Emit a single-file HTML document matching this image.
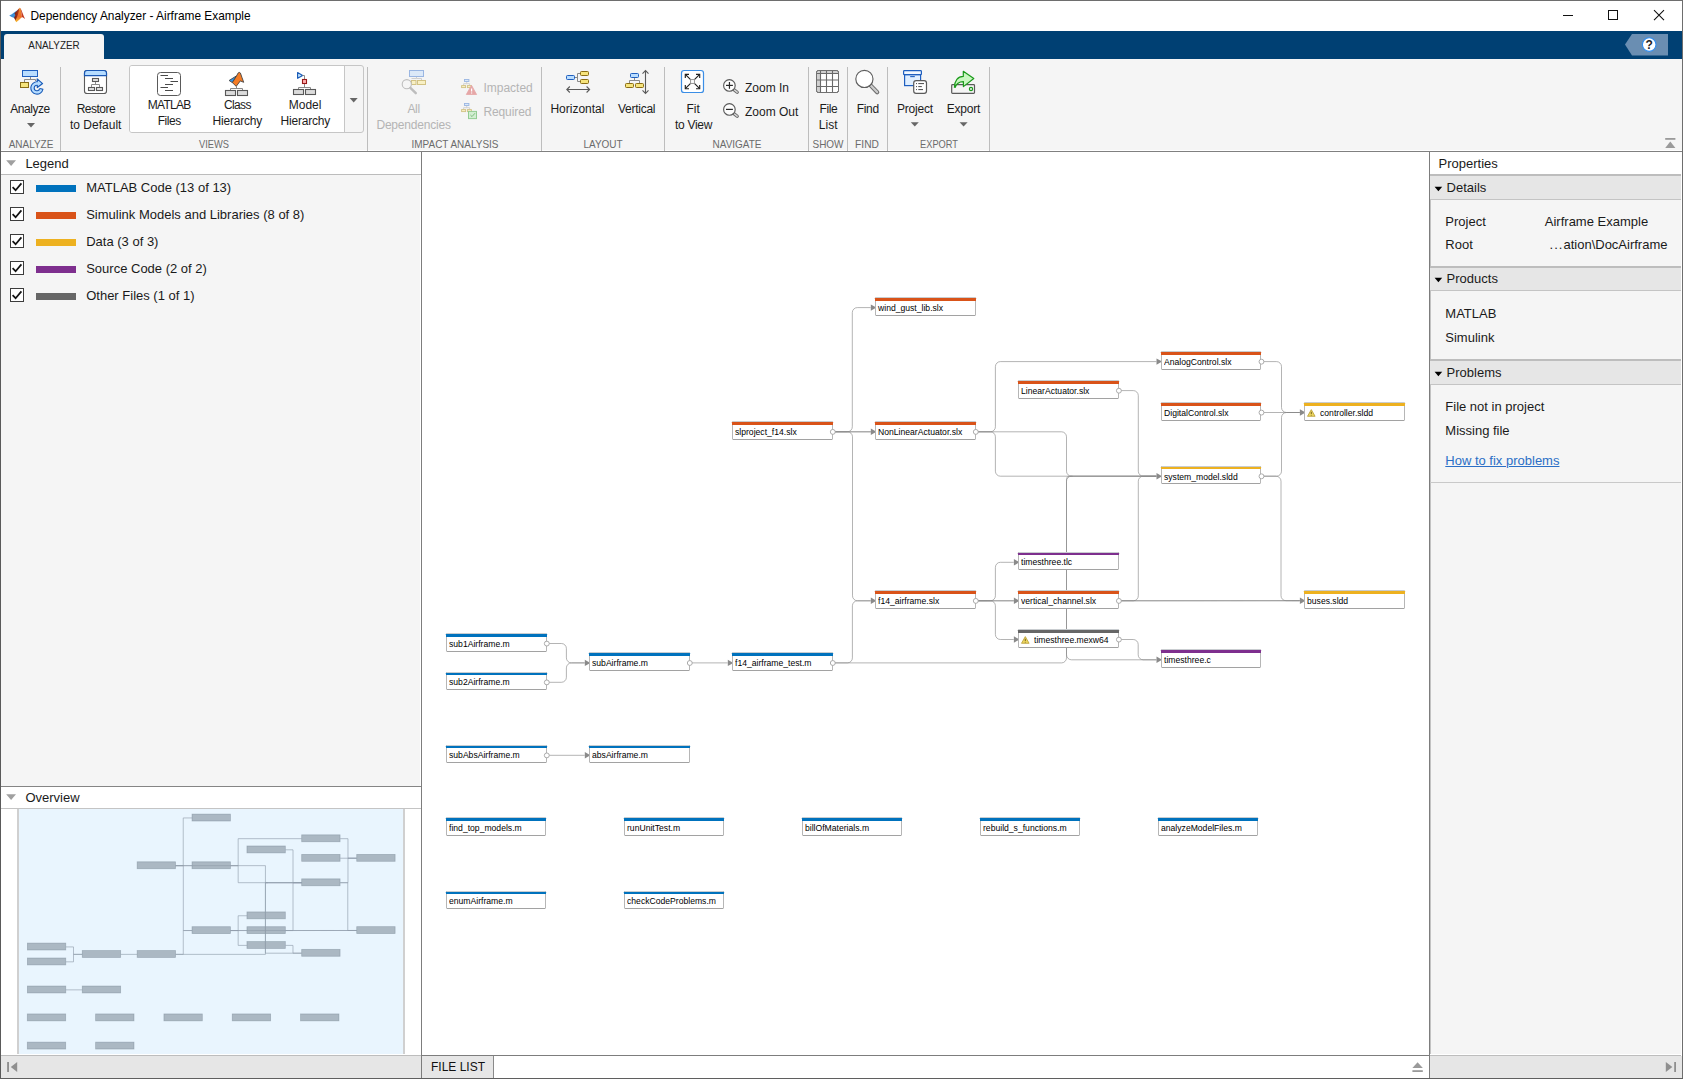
<!DOCTYPE html>
<html lang="en"><head><meta charset="utf-8"><title>Dependency Analyzer - Airframe Example</title>
<style>
*{box-sizing:border-box;margin:0;padding:0}
html,body{width:1683px;height:1079px;overflow:hidden;background:#fff}
body{position:relative;font-family:"Liberation Sans",sans-serif;font-size:13px;color:#1a1a1a}
svg{position:absolute;overflow:visible}
.nd{position:absolute;width:100.4px;height:18px;background:#fff;border:1px solid #b6b6b6;border-bottom-color:#a2a2a2;border-top:none;border-radius:0 0 1.5px 1.5px}
.nd i{position:absolute;left:-1px;right:-1px;top:-.6px;height:3.6px;display:block;border-top:.6px solid #c9cdd0;border-radius:1.2px 1.2px 0 0;background-clip:padding-box}
.nd span{position:absolute;left:1.8px;top:4.25px;font-size:9.4px;line-height:12px;white-space:nowrap;transform:scaleX(.918);transform-origin:0 50%;color:#000;font-style:normal}
.nd.w span{left:14.4px}
</style></head><body>
<div style="position:absolute;left:0px;top:0px;width:1683px;height:31px;background:#fff;"></div>
<svg style="left:0px;top:0px" width="34" height="30" viewBox="0 0 34 30">
<defs><linearGradient id="lg1" x1="0" y1="0" x2="1" y2="0"><stop offset="0" stop-color="#6a1a14"/><stop offset="1" stop-color="#c8401a"/></linearGradient>
<linearGradient id="lg2" x1="0" y1="0" x2="0" y2="1"><stop offset="0" stop-color="#e8902a"/><stop offset=".6" stop-color="#ee6a2a"/><stop offset="1" stop-color="#f6c030"/></linearGradient></defs>
<path d="M9.2 15.6 C12 14.2 15.4 11.6 18.6 9.2 L16 14.6 L14.2 18 C12.6 17.6 10.8 16.6 9.2 15.6 Z" fill="#3d8fd6"/>
<path d="M14.4 13.2 C16.2 11.8 18 9.6 19.4 7.9 L19.8 12 L17.6 18.6 L15.6 20.8 L14 17.8 L15.4 15 Z" fill="url(#lg1)"/>
<path d="M19.4 7.9 C20.2 7.6 20.6 8.6 21 10 L22 17.2 C20.4 18.4 18.2 20.8 16.3 22.2 L15.2 20.6 C17.2 17.6 18.8 12.6 19.4 7.9 Z" fill="url(#lg2)"/>
<path d="M20.2 8 C21.6 9.6 23 14.6 25.1 19 C23.8 18 22.8 17.4 21.9 17 C21.6 13.6 21.2 10.4 20.2 8 Z" fill="#c23a22"/>
</svg>
<div style="position:absolute;top:10.93px;font-size:11.9px;line-height:11.9px;color:#000;white-space:nowrap;left:30.50px;">Dependency Analyzer - Airframe Example</div>
<svg style="left:1555px;top:5px" width="120" height="22" viewBox="0 0 120 22">
<path d="M8 10.5 H18" stroke="#111" stroke-width="1" fill="none"/>
<rect x="53.5" y="5.5" width="9" height="9" stroke="#111" stroke-width="1" fill="none"/>
<path d="M99 5.2 L109 15.2 M109 5.2 L99 15.2" stroke="#111" stroke-width="1.1" fill="none"/>
</svg>
<div style="position:absolute;left:1px;top:31px;width:1681px;height:28px;background:#004073;"></div>
<div style="position:absolute;left:4px;top:34px;width:100px;height:25px;background:#f5f5f5;border-radius:3px 3px 0 0;"></div>
<div style="position:absolute;top:39.65px;font-size:11.4px;line-height:11.4px;color:#222;white-space:nowrap;left:-95.80px;width:300px;text-align:center;transform:scaleX(.865);">ANALYZER</div>
<svg style="left:1624px;top:33px" width="46" height="24" viewBox="0 0 46 24">
<path d="M1 11.6 L8 1 H44 V22.6 H8 Z" fill="#6a8eb2"/>
<circle cx="25.2" cy="11.6" r="6.8" fill="#fff" stroke="#2d8cf0" stroke-width="1.1"/>
<text x="25.2" y="16" font-family="Liberation Sans, sans-serif" font-size="12" font-weight="bold" text-anchor="middle" fill="#222">?</text>
</svg>
<div style="position:absolute;left:1px;top:59px;width:1681px;height:91px;background:#f5f5f5;"></div>
<div style="position:absolute;left:1px;top:150px;width:1681px;height:1px;background:#fff;"></div>
<div style="position:absolute;left:1px;top:151px;width:1681px;height:1px;background:#808080;"></div>
<svg style="left:1664px;top:137px" width="13" height="12" viewBox="0 0 13 12">
<rect x="1.2" y="1" width="10.2" height="1.8" fill="#9a9a9a"/>
<path d="M1.2 11 L6.3 4.6 L11.4 11 Z" fill="#9a9a9a"/>
</svg>
<div style="position:absolute;left:60px;top:67px;width:1px;height:84px;background:#bdbdbd;"></div>
<div style="position:absolute;left:367px;top:67px;width:1px;height:84px;background:#bdbdbd;"></div>
<div style="position:absolute;left:541px;top:67px;width:1px;height:84px;background:#bdbdbd;"></div>
<div style="position:absolute;left:664px;top:67px;width:1px;height:84px;background:#bdbdbd;"></div>
<div style="position:absolute;left:808px;top:67px;width:1px;height:84px;background:#bdbdbd;"></div>
<div style="position:absolute;left:847px;top:67px;width:1px;height:84px;background:#bdbdbd;"></div>
<div style="position:absolute;left:887px;top:67px;width:1px;height:84px;background:#bdbdbd;"></div>
<div style="position:absolute;left:989px;top:67px;width:1px;height:84px;background:#bdbdbd;"></div>
<div style="position:absolute;left:129px;top:65px;width:235px;height:68px;border:1px solid #c6c6c6;border-radius:3px;background:#f5f5f5"></div>
<div style="position:absolute;left:130px;top:66px;width:215px;height:66px;background:#fff;border-right:1px solid #c6c6c6;border-radius:2px 0 0 2px"></div>
<div style="position:absolute;top:102.74px;font-size:12px;line-height:12px;color:#1c1c1c;white-space:nowrap;left:-120.00px;width:300px;text-align:center;letter-spacing:-0.43px;">Analyze</div>
<div style="position:absolute;top:102.74px;font-size:12px;line-height:12px;color:#1c1c1c;white-space:nowrap;left:-54.10px;width:300px;text-align:center;letter-spacing:-0.5px;">Restore</div>
<div style="position:absolute;top:118.54px;font-size:12px;line-height:12px;color:#1c1c1c;white-space:nowrap;left:-54.30px;width:300px;text-align:center;">to Default</div>
<div style="position:absolute;top:98.54px;font-size:12px;line-height:12px;color:#1c1c1c;white-space:nowrap;left:19.20px;width:300px;text-align:center;letter-spacing:-0.7px;">MATLAB</div>
<div style="position:absolute;top:115.34px;font-size:12px;line-height:12px;color:#1c1c1c;white-space:nowrap;left:19.30px;width:300px;text-align:center;letter-spacing:-0.44px;">Files</div>
<div style="position:absolute;top:98.54px;font-size:12px;line-height:12px;color:#1c1c1c;white-space:nowrap;left:87.40px;width:300px;text-align:center;letter-spacing:-0.6px;">Class</div>
<div style="position:absolute;top:115.34px;font-size:12px;line-height:12px;color:#1c1c1c;white-space:nowrap;left:87.30px;width:300px;text-align:center;letter-spacing:-0.22px;">Hierarchy</div>
<div style="position:absolute;top:98.54px;font-size:12px;line-height:12px;color:#1c1c1c;white-space:nowrap;left:155.10px;width:300px;text-align:center;">Model</div>
<div style="position:absolute;top:115.34px;font-size:12px;line-height:12px;color:#1c1c1c;white-space:nowrap;left:155.30px;width:300px;text-align:center;letter-spacing:-0.22px;">Hierarchy</div>
<div style="position:absolute;top:103.24px;font-size:12px;line-height:12px;color:#b4b4b4;white-space:nowrap;left:263.60px;width:300px;text-align:center;letter-spacing:-0.4px;">All</div>
<div style="position:absolute;top:119.24px;font-size:12px;line-height:12px;color:#b4b4b4;white-space:nowrap;left:263.60px;width:300px;text-align:center;letter-spacing:-0.2px;">Dependencies</div>
<div style="position:absolute;top:81.74px;font-size:12px;line-height:12px;color:#b4b4b4;white-space:nowrap;left:483.40px;">Impacted</div>
<div style="position:absolute;top:106.24px;font-size:12px;line-height:12px;color:#b4b4b4;white-space:nowrap;left:483.40px;letter-spacing:-0.1px;">Required</div>
<div style="position:absolute;top:102.74px;font-size:12px;line-height:12px;color:#1c1c1c;white-space:nowrap;left:427.40px;width:300px;text-align:center;">Horizontal</div>
<div style="position:absolute;top:102.74px;font-size:12px;line-height:12px;color:#1c1c1c;white-space:nowrap;left:486.60px;width:300px;text-align:center;letter-spacing:-0.25px;">Vertical</div>
<div style="position:absolute;top:102.74px;font-size:12px;line-height:12px;color:#1c1c1c;white-space:nowrap;left:543.20px;width:300px;text-align:center;">Fit</div>
<div style="position:absolute;top:118.84px;font-size:12px;line-height:12px;color:#1c1c1c;white-space:nowrap;left:543.50px;width:300px;text-align:center;letter-spacing:-0.28px;">to View</div>
<div style="position:absolute;top:81.84px;font-size:12px;line-height:12px;color:#1c1c1c;white-space:nowrap;left:745.00px;">Zoom In</div>
<div style="position:absolute;top:105.74px;font-size:12px;line-height:12px;color:#1c1c1c;white-space:nowrap;left:745.00px;">Zoom Out</div>
<div style="position:absolute;top:102.74px;font-size:12px;line-height:12px;color:#1c1c1c;white-space:nowrap;left:678.40px;width:300px;text-align:center;letter-spacing:-0.37px;">File</div>
<div style="position:absolute;top:118.74px;font-size:12px;line-height:12px;color:#1c1c1c;white-space:nowrap;left:678.20px;width:300px;text-align:center;">List</div>
<div style="position:absolute;top:102.74px;font-size:12px;line-height:12px;color:#1c1c1c;white-space:nowrap;left:717.80px;width:300px;text-align:center;letter-spacing:-0.37px;">Find</div>
<div style="position:absolute;top:102.74px;font-size:12px;line-height:12px;color:#1c1c1c;white-space:nowrap;left:764.90px;width:300px;text-align:center;letter-spacing:-0.2px;">Project</div>
<div style="position:absolute;top:102.74px;font-size:12px;line-height:12px;color:#1c1c1c;white-space:nowrap;left:813.40px;width:300px;text-align:center;letter-spacing:-0.2px;">Export</div>
<div style="position:absolute;top:137.88px;font-size:11.6px;line-height:11.6px;color:#6b6b6b;white-space:nowrap;left:-119.50px;width:300px;text-align:center;transform:scaleX(0.86);">ANALYZE</div>
<div style="position:absolute;top:137.88px;font-size:11.6px;line-height:11.6px;color:#6b6b6b;white-space:nowrap;left:64.30px;width:300px;text-align:center;transform:scaleX(0.8);">VIEWS</div>
<div style="position:absolute;top:137.88px;font-size:11.6px;line-height:11.6px;color:#6b6b6b;white-space:nowrap;left:304.50px;width:300px;text-align:center;transform:scaleX(0.86);">IMPACT ANALYSIS</div>
<div style="position:absolute;top:137.88px;font-size:11.6px;line-height:11.6px;color:#6b6b6b;white-space:nowrap;left:453.00px;width:300px;text-align:center;transform:scaleX(0.86);">LAYOUT</div>
<div style="position:absolute;top:137.88px;font-size:11.6px;line-height:11.6px;color:#6b6b6b;white-space:nowrap;left:587.00px;width:300px;text-align:center;transform:scaleX(0.86);">NAVIGATE</div>
<div style="position:absolute;top:137.88px;font-size:11.6px;line-height:11.6px;color:#6b6b6b;white-space:nowrap;left:678.00px;width:300px;text-align:center;transform:scaleX(0.86);">SHOW</div>
<div style="position:absolute;top:137.88px;font-size:11.6px;line-height:11.6px;color:#6b6b6b;white-space:nowrap;left:717.40px;width:300px;text-align:center;transform:scaleX(0.88);">FIND</div>
<div style="position:absolute;top:137.88px;font-size:11.6px;line-height:11.6px;color:#6b6b6b;white-space:nowrap;left:788.50px;width:300px;text-align:center;transform:scaleX(0.8);">EXPORT</div>
<svg style="left:0;top:59px" width="1683" height="92" viewBox="0 59 1683 92"><path d="M27 123 H35 L31 127.4 Z" fill="#666"/><path d="M910.8 122.2 H918.8 L914.8 126.60000000000001 Z" fill="#666"/><path d="M959.6 122.2 H967.6 L963.6 126.60000000000001 Z" fill="#666"/><path d="M349.7 98 H357.7 L353.7 102.4 Z" fill="#666"/><rect x="22.5" y="70.5" width="15" height="6" fill="#b9ddff" stroke="#1f5fbf"/><path d="M30.5 77 V79.5 M24.5 82 V79.5 H35.5 V81" stroke="#8a8a8a" fill="none"/><rect x="20.5" y="82.5" width="8" height="5" fill="#f6e47c" stroke="#8a6d14"/><path d="M37.2 83.55 A4.45 4.45 0 1 0 41.3 88.9" stroke="#1a5cb8" stroke-width="4.5" fill="none"/><path d="M37.2 78.9 L42.6 83.6 L37.3 87.5 Z" fill="#b5dcff" stroke="#1a5cb8" stroke-width="1.2" stroke-linejoin="round"/><path d="M37.6 83.55 A4.45 4.45 0 1 0 41.3 88.9" stroke="#b5dcff" stroke-width="2.3" fill="none"/><path d="M36.4 82.4 H38.4 V84.7 H36.4 Z" fill="#b5dcff"/><path d="M39.6 88.5 L43.2 89.3" stroke="#1a5cb8" stroke-width="1.1" fill="none"/><rect x="84.5" y="70.5" width="22" height="23" rx="2.6" fill="#fff" stroke="#5a5a5a" stroke-width="1.1"/><path d="M84.5 75.6 V73 A2.5 2.5 0 0 1 87 70.5 H104 A2.5 2.5 0 0 1 106.5 73 V75.6 Z" fill="#b5dcff" stroke="#1a58b4" stroke-width="1.2"/><rect x="92.5" y="78.5" width="6" height="3" fill="#e4e4e4" stroke="#585858" stroke-width="1.1"/><rect x="88.5" y="87.5" width="6" height="3" fill="#e4e4e4" stroke="#585858" stroke-width="1.1"/><rect x="96.5" y="87.5" width="6" height="3" fill="#e4e4e4" stroke="#585858" stroke-width="1.1"/><path d="M95.5 82 V84.5 M91.5 87 V84.5 H99.5 V87" stroke="#8a8a8a" fill="none"/><rect x="157.5" y="72.5" width="23" height="23" rx="3" fill="#fff" stroke="#5a5a5a"/><path d="M160.5 75.5 H168 M165 78.5 H173 M170.5 81.5 H178 M165 84.5 H173 M160.5 87.5 H168 M165 90.5 H173" stroke="#4a4a4a" fill="none"/><path d="M229.1 80.5 L236.6 75.8 L232.4 82.6 Z" fill="#2f96ee" stroke="#444" stroke-width=".9" stroke-linejoin="round"/><path d="M236.6 75.8 L238.2 72.9 Q239.3 71.8 240.4 73.0 L242.0 77.6 L243.7 82.3 L240.3 80.9 L236.2 86.4 L232.4 82.6 Z" fill="#f47c26" stroke="#444" stroke-width=".9" stroke-linejoin="round"/><path d="M236.5 86 V88.5 M230.5 90 V88.5 H242.5 V90" stroke="#8a8a8a" fill="none"/><rect x="225.5" y="90.5" width="10" height="5" fill="#dcdcdc" stroke="#585858" stroke-width="1.1"/><rect x="237.5" y="90.5" width="10" height="5" fill="#dcdcdc" stroke="#585858" stroke-width="1.1"/><path d="M297.6 72.5 L302.6 75.4 L297.6 78.3 Z" fill="#c8e8ff" stroke="#1a5cb8" stroke-width="1.2" stroke-linejoin="round"/><path d="M302.5 75.5 H304.5 V79 M304.5 84 V87.5 M298.5 89.5 V87.5 H310.5 V89.5" stroke="#8a8a8a" fill="none"/><rect x="302.5" y="79.5" width="4" height="4" fill="#ffb0b0" stroke="#981818" stroke-width="1.1"/><rect x="293.5" y="89.5" width="10" height="5" fill="#dcdcdc" stroke="#585858" stroke-width="1.1"/><rect x="305.5" y="89.5" width="10" height="5" fill="#dcdcdc" stroke="#585858" stroke-width="1.1"/><rect x="409.5" y="70.5" width="14" height="6" fill="#dce9f8" stroke="#9ab6e2"/><path d="M416.5 77 V78.5 H411.5 M416.5 78.5 H421.5 V80" stroke="#cfcfcf" fill="none"/><rect x="411.5" y="80.5" width="4.5" height="4" fill="#f8f0c4" stroke="#d2c284"/><rect x="417.5" y="80.5" width="8" height="4" fill="#f8f0c4" stroke="#d2c284"/><circle cx="406.8" cy="84.2" r="4.6" fill="#f5f5f5" stroke="#bdbdbd" stroke-width="1.1"/><path d="M410.4 87.8 L415.8 93.2" stroke="#bdbdbd" stroke-width="2.4" stroke-linecap="round" fill="none"/><rect x="464.5" y="79.5" width="4.4" height="2" fill="#dce9f8" stroke="#9ab6e2" stroke-width=".9"/><path d="M466.7 82 V83.7 M463.6 85.4 V83.7 H469.6 V85.4" stroke="#cfcfcf" stroke-width=".9" fill="none"/><rect x="461.6" y="85.6" width="4" height="2" fill="#f8f0c4" stroke="#d2c284" stroke-width=".9"/><rect x="467.4" y="85.6" width="4" height="2" fill="#f8f0c4" stroke="#d2c284" stroke-width=".9"/><rect x="464.5" y="103.5" width="4.4" height="2" fill="#dce9f8" stroke="#9ab6e2" stroke-width=".9"/><path d="M466.7 106 V107.7 M463.6 109.4 V107.7 H469.6 V109.4" stroke="#cfcfcf" stroke-width=".9" fill="none"/><rect x="461.6" y="109.6" width="4" height="2" fill="#f8f0c4" stroke="#d2c284" stroke-width=".9"/><rect x="467.4" y="109.6" width="4" height="2" fill="#f8f0c4" stroke="#d2c284" stroke-width=".9"/><path d="M471.5 85.3 L476.6 94.5 H466.3 Z" fill="#e6a7a7" stroke="#e6a7a7" stroke-width=".8" stroke-linejoin="round"/><path d="M471.6 88.4 V91.4 M471.6 92.6 V93.6" stroke="#fff" stroke-width="1.2" fill="none"/><rect x="468.5" y="111.4" width="8" height="7.2" fill="#d2eed2" stroke="#93cc93"/><path d="M470.4 115 L472 116.6 L475 113.2" stroke="#7fbf7f" stroke-width="1" fill="none"/><rect x="566.5" y="75.5" width="8" height="4" rx=".9" fill="#b9ddff" stroke="#1f5fbf"/><path d="M575 77.5 H577.5 M580 73.5 H577.5 V81.5 H580" stroke="#8a8a8a" fill="none"/><rect x="580.5" y="71.5" width="8" height="4" rx=".9" fill="#f6e47c" stroke="#8a6d14"/><rect x="580.5" y="79.5" width="8" height="4" rx=".9" fill="#f6e47c" stroke="#8a6d14"/><path d="M566.8 89.5 H589.6 M569.8 86.5 L566.8 89.5 L569.8 92.5 M586.6 86.5 L589.6 89.5 L586.6 92.5" stroke="#5a5a5a" stroke-width="1.1" fill="none"/><rect x="630.5" y="73.5" width="8" height="4" rx=".9" fill="#b9ddff" stroke="#1f5fbf"/><path d="M634.5 78 V80.5 M629.5 83 V80.5 H639.5 V83" stroke="#8a8a8a" fill="none"/><rect x="625.5" y="83.5" width="8" height="4" rx=".9" fill="#f6e47c" stroke="#8a6d14"/><rect x="635.5" y="83.5" width="8" height="4" rx=".9" fill="#f6e47c" stroke="#8a6d14"/><path d="M645.5 70.6 V93.4 M642.5 73.6 L645.5 70.6 L648.5 73.6 M642.5 90.4 L645.5 93.4 L648.5 90.4" stroke="#5a5a5a" stroke-width="1.1" fill="none"/><rect x="681.5" y="70.5" width="22" height="22" rx="2.6" fill="#fff" stroke="#3b8ee6" stroke-width="1.2"/><path d="M690.6 79.6 L685.3 74.3 M694.4 79.6 L699.7 74.3 M690.6 83.4 L685.3 88.7 M694.4 83.4 L699.7 88.7" stroke="#222" stroke-width="1.15" fill="none"/><path d="M685.3 78 V74.3 H689 M696 74.3 H699.7 V78 M685.3 85 V88.7 H689 M696 88.7 H699.7 V85" stroke="#222" stroke-width="1.15" fill="none"/><rect x="690.6" y="79.6" width="3.8" height="3.8" fill="#fff" stroke="#8a8a8a" stroke-width=".9"/><path d="M734 89.7 L737.2 92.3" stroke="#6a6a6a" stroke-width="3.4" stroke-linecap="round" fill="none"/><path d="M734.4 90.0 L737.1 92.2" stroke="#d6d6d6" stroke-width="1.5" stroke-linecap="round" fill="none"/><circle cx="729.4" cy="85.4" r="5.8" fill="#fdfdfd" stroke="#5a5a5a" stroke-width="1.15"/><path d="M726 85.4 H732.9" stroke="#2a2a2a" stroke-width="1.2" fill="none"/><path d="M729.45 82.0 V88.8" stroke="#2a2a2a" stroke-width="1.2" fill="none"/><path d="M734 113.7 L737.2 116.3" stroke="#6a6a6a" stroke-width="3.4" stroke-linecap="round" fill="none"/><path d="M734.4 114.0 L737.1 116.2" stroke="#d6d6d6" stroke-width="1.5" stroke-linecap="round" fill="none"/><circle cx="729.4" cy="109.4" r="5.8" fill="#fdfdfd" stroke="#5a5a5a" stroke-width="1.15"/><path d="M726 109.4 H732.9" stroke="#2a2a2a" stroke-width="1.2" fill="none"/><rect x="816.5" y="70.5" width="22" height="22" rx="2" fill="#fff" stroke="#707070"/><path d="M817 71 H838 V73.5 H817 Z M817 71 H820.5 V92 H817 Z" fill="#d0d0d0"/><path d="M816.5 73.5 H838.5 M816.5 80 H838.5 M816.5 86.5 H838.5 M820.5 70.5 V92.5 M826.5 70.5 V92.5 M832.5 70.5 V92.5" stroke="#6a6a6a" stroke-width="1.1" fill="none"/><rect x="816.5" y="70.5" width="22" height="22" rx="2" fill="none" stroke="#707070"/><path d="M870.6 85.4 L877.2 92.2" stroke="#6e6e6e" stroke-width="4.2" stroke-linecap="round" fill="none"/><path d="M871 85.8 L877.1 92.1" stroke="#cdcdcd" stroke-width="2.2" stroke-linecap="round" fill="none"/><circle cx="864.4" cy="78.9" r="8.6" fill="#fff" stroke="#5f5f5f" stroke-width="1.15"/><rect x="904.6" y="74.6" width="16" height="11" fill="#e0efff" stroke="#1f5fbf" stroke-width="1.2"/><rect x="903.6" y="70.7" width="17.8" height="4" rx=".8" fill="#f2f8ff" stroke="#1f5fbf" stroke-width="1.2"/><path d="M910.2 76.6 H914.8" stroke="#1f5fbf" stroke-width="1.1" fill="none"/><rect x="913.7" y="80.6" width="12.8" height="12.8" rx="2.4" fill="#fff" stroke="#5a5a5a" stroke-width="1.2"/><path d="M916 83.6 H917 M918.3 83.6 H924 M916 86.6 H917 M918.3 86.6 H921.8 M916 89.6 H917 M918.3 89.6 H923" stroke="#4a4a4a" stroke-width="1" fill="none"/><rect x="951.7" y="84.6" width="22.8" height="8.8" rx=".8" fill="#f5f5f5" stroke="#5a5a5a" stroke-width="1.2"/><circle cx="971" cy="89" r="1.6" fill="#f5f5f5" stroke="#1a9a1a" stroke-width="1.2"/><path d="M954.4 87.8 C954.4 80.6 958 76.4 963.3 76.4 V71.3 L973.8 78.5 L963.4 86.6 V81.6 C959.2 81.6 956.2 83.6 955 87.8" fill="#c8f7c0" stroke="#1a9a1a" stroke-width="1.2" stroke-linejoin="round"/></svg>
<div style="position:absolute;left:1px;top:152px;width:420px;height:903px;background:#f5f5f5;"></div>
<div style="position:absolute;left:420px;top:152px;width:1px;height:903px;background:#fff;"></div>
<div style="position:absolute;left:421px;top:152px;width:1px;height:927px;background:#7d7d7d;"></div>
<div style="position:absolute;left:1px;top:152px;width:420px;height:22px;background:#fff;"></div>
<div style="position:absolute;left:1px;top:174px;width:420px;height:1px;background:#bcbcbc;"></div>
<svg style="left:5px;top:159px" width="12" height="8" viewBox="0 0 12 8"><path d="M1.2 1.2 H11 L6.1 6.9 Z" fill="#a0a0a0"/></svg>
<div style="position:absolute;top:156.90px;font-size:13px;line-height:13px;color:#1a1a1a;white-space:nowrap;left:25.40px;">Legend</div>
<div style="position:absolute;left:10px;top:180px;width:14px;height:14px;background:#fff;border:1px solid #3c3c3c"></div>
<svg style="left:10px;top:180px" width="14" height="14" viewBox="0 0 14 14"><path d="M2.6 7.2 L5.6 10.2 L11.4 3.4" stroke="#111" stroke-width="1.7" fill="none"/></svg>
<div style="position:absolute;left:36px;top:185px;width:40px;height:7px;background:#0072bd;"></div>
<div style="position:absolute;top:180.80px;font-size:13px;line-height:13px;color:#1a1a1a;white-space:nowrap;left:86.20px;">MATLAB Code (13 of 13)</div>
<div style="position:absolute;left:10px;top:207px;width:14px;height:14px;background:#fff;border:1px solid #3c3c3c"></div>
<svg style="left:10px;top:207px" width="14" height="14" viewBox="0 0 14 14"><path d="M2.6 7.2 L5.6 10.2 L11.4 3.4" stroke="#111" stroke-width="1.7" fill="none"/></svg>
<div style="position:absolute;left:36px;top:212px;width:40px;height:7px;background:#d95319;"></div>
<div style="position:absolute;top:207.80px;font-size:13px;line-height:13px;color:#1a1a1a;white-space:nowrap;left:86.20px;">Simulink Models and Libraries (8 of 8)</div>
<div style="position:absolute;left:10px;top:234px;width:14px;height:14px;background:#fff;border:1px solid #3c3c3c"></div>
<svg style="left:10px;top:234px" width="14" height="14" viewBox="0 0 14 14"><path d="M2.6 7.2 L5.6 10.2 L11.4 3.4" stroke="#111" stroke-width="1.7" fill="none"/></svg>
<div style="position:absolute;left:36px;top:239px;width:40px;height:7px;background:#edb120;"></div>
<div style="position:absolute;top:234.80px;font-size:13px;line-height:13px;color:#1a1a1a;white-space:nowrap;left:86.20px;">Data (3 of 3)</div>
<div style="position:absolute;left:10px;top:261px;width:14px;height:14px;background:#fff;border:1px solid #3c3c3c"></div>
<svg style="left:10px;top:261px" width="14" height="14" viewBox="0 0 14 14"><path d="M2.6 7.2 L5.6 10.2 L11.4 3.4" stroke="#111" stroke-width="1.7" fill="none"/></svg>
<div style="position:absolute;left:36px;top:266px;width:40px;height:7px;background:#7e2f8e;"></div>
<div style="position:absolute;top:261.80px;font-size:13px;line-height:13px;color:#1a1a1a;white-space:nowrap;left:86.20px;">Source Code (2 of 2)</div>
<div style="position:absolute;left:10px;top:288px;width:14px;height:14px;background:#fff;border:1px solid #3c3c3c"></div>
<svg style="left:10px;top:288px" width="14" height="14" viewBox="0 0 14 14"><path d="M2.6 7.2 L5.6 10.2 L11.4 3.4" stroke="#111" stroke-width="1.7" fill="none"/></svg>
<div style="position:absolute;left:36px;top:293px;width:40px;height:7px;background:#666666;"></div>
<div style="position:absolute;top:288.80px;font-size:13px;line-height:13px;color:#1a1a1a;white-space:nowrap;left:86.20px;">Other Files (1 of 1)</div>
<div style="position:absolute;left:1px;top:786px;width:420px;height:1px;background:#858585;"></div>
<div style="position:absolute;left:1px;top:787px;width:420px;height:21px;background:#fff;"></div>
<div style="position:absolute;left:1px;top:808px;width:420px;height:1px;background:#c4c4c4;"></div>
<svg style="left:5px;top:793px" width="12" height="8" viewBox="0 0 12 8"><path d="M1.2 1.2 H11 L6.1 6.9 Z" fill="#a0a0a0"/></svg>
<div style="position:absolute;top:790.60px;font-size:13px;line-height:13px;color:#1a1a1a;white-space:nowrap;left:25.40px;">Overview</div>
<div style="position:absolute;left:1px;top:809px;width:420px;height:245px;background:#fff;"></div>
<div style="position:absolute;left:17px;top:809px;width:388px;height:245px;background:#e9f5fe;border-left:2px solid #d0d0d0;border-right:2px solid #d0d0d0;"></div>
<div style="position:absolute;left:1px;top:1054px;width:420px;height:1px;background:#fff;"></div>
<div style="position:absolute;left:1px;top:1055px;width:420px;height:1px;background:#bdbdbd;"></div>
<div style="position:absolute;left:1px;top:1056px;width:420px;height:22px;background:#e6e6e6;"></div>
<svg style="left:5px;top:1061px" width="14" height="12" viewBox="0 0 14 12"><rect x="2.1" y="1" width="1.9" height="10" fill="#8f8f8f"/><path d="M12.2 1 V11 L5.8 6 Z" fill="#8f8f8f"/></svg>
<div style="position:absolute;left:422px;top:1055px;width:1007px;height:1px;background:#7d7d7d;"></div>
<div style="position:absolute;left:422px;top:1056px;width:1007px;height:22px;background:#fff;"></div>
<div style="position:absolute;left:422px;top:1056px;width:71px;height:22px;background:#e6e6e6;"></div>
<div style="position:absolute;left:493px;top:1056px;width:1px;height:22px;background:#8a8a8a;"></div>
<div style="position:absolute;top:1060.64px;font-size:12px;line-height:12px;color:#111;white-space:nowrap;left:431.00px;">FILE LIST</div>
<svg style="left:1411px;top:1061px" width="14" height="12" viewBox="0 0 14 12"><path d="M1.4 7 L6.6 1.2 L11.8 7 Z" fill="#9a9a9a"/><rect x="1.4" y="9.2" width="10.4" height="1.8" fill="#9a9a9a"/></svg>
<div style="position:absolute;left:1429px;top:152px;width:1px;height:927px;background:#7d7d7d;"></div>
<div style="position:absolute;left:1430px;top:152px;width:251px;height:902px;background:#f5f5f5;"></div>
<div style="position:absolute;left:1430px;top:152px;width:1px;height:927px;background:#c2c2c2;"></div>
<div style="position:absolute;left:1681px;top:152px;width:1px;height:926px;background:#fff;"></div>
<div style="position:absolute;left:1430px;top:152px;width:251px;height:22px;background:#fff;"></div>
<div style="position:absolute;top:156.90px;font-size:13px;line-height:13px;color:#1a1a1a;white-space:nowrap;left:1438.60px;">Properties</div>
<div style="position:absolute;left:1430px;top:174px;width:251px;height:2px;background:#bdbdbd;"></div>
<div style="position:absolute;left:1430px;top:176px;width:251px;height:23px;background:#e6e6e6;"></div>
<div style="position:absolute;left:1430px;top:199px;width:251px;height:1px;background:#c4c4c4;"></div>
<svg style="left:1434px;top:185.8px" width="9" height="6" viewBox="0 0 9 6"><path d="M0.6 0.8 H8.2 L4.4 5.2 Z" fill="#000"/></svg>
<div style="position:absolute;top:180.80px;font-size:13px;line-height:13px;color:#1a1a1a;white-space:nowrap;left:1446.60px;">Details</div>
<div style="position:absolute;top:215.20px;font-size:13px;line-height:13px;color:#1a1a1a;white-space:nowrap;left:1445.30px;">Project</div>
<div style="position:absolute;top:215.20px;font-size:13px;line-height:13px;color:#1a1a1a;white-space:nowrap;left:1544.80px;">Airframe Example</div>
<div style="position:absolute;top:238.00px;font-size:13px;line-height:13px;color:#1a1a1a;white-space:nowrap;left:1445.30px;">Root</div>
<div style="position:absolute;top:238.00px;font-size:13px;line-height:13px;color:#1a1a1a;white-space:nowrap;left:1549.60px;"><span style="letter-spacing:1px">...</span>ation\DocAirframe</div>
<div style="position:absolute;left:1430px;top:266px;width:251px;height:2px;background:#bdbdbd;"></div>
<div style="position:absolute;left:1430px;top:268px;width:251px;height:22px;background:#e6e6e6;"></div>
<div style="position:absolute;left:1430px;top:290px;width:251px;height:1px;background:#c4c4c4;"></div>
<svg style="left:1434px;top:276.9px" width="9" height="6" viewBox="0 0 9 6"><path d="M0.6 0.8 H8.2 L4.4 5.2 Z" fill="#000"/></svg>
<div style="position:absolute;top:271.90px;font-size:13px;line-height:13px;color:#1a1a1a;white-space:nowrap;left:1446.60px;">Products</div>
<div style="position:absolute;top:307.00px;font-size:13px;line-height:13px;color:#1a1a1a;white-space:nowrap;left:1445.30px;">MATLAB</div>
<div style="position:absolute;top:331.00px;font-size:13px;line-height:13px;color:#1a1a1a;white-space:nowrap;left:1445.30px;">Simulink</div>
<div style="position:absolute;left:1430px;top:359px;width:251px;height:2px;background:#bdbdbd;"></div>
<div style="position:absolute;left:1430px;top:361px;width:251px;height:23px;background:#e6e6e6;"></div>
<div style="position:absolute;left:1430px;top:384px;width:251px;height:1px;background:#c4c4c4;"></div>
<svg style="left:1434px;top:370.8px" width="9" height="6" viewBox="0 0 9 6"><path d="M0.6 0.8 H8.2 L4.4 5.2 Z" fill="#000"/></svg>
<div style="position:absolute;top:365.80px;font-size:13px;line-height:13px;color:#1a1a1a;white-space:nowrap;left:1446.60px;">Problems</div>
<div style="position:absolute;top:400.00px;font-size:13px;line-height:13px;color:#1a1a1a;white-space:nowrap;left:1445.30px;">File not in project</div>
<div style="position:absolute;top:423.80px;font-size:13px;line-height:13px;color:#1a1a1a;white-space:nowrap;left:1445.30px;">Missing file</div>
<div style="position:absolute;top:454.20px;font-size:13px;line-height:13px;color:#2b6fc6;white-space:nowrap;left:1445.30px;text-decoration:underline;">How to fix problems</div>
<div style="position:absolute;left:1430px;top:482px;width:251px;height:1px;background:#c9c9c9;"></div>
<div style="position:absolute;left:1430px;top:1054px;width:251px;height:1px;background:#fff;"></div>
<div style="position:absolute;left:1430px;top:1055px;width:251px;height:1px;background:#bdbdbd;"></div>
<div style="position:absolute;left:1430px;top:1056px;width:252px;height:22px;background:#e6e6e6;"></div>
<svg style="left:1664px;top:1061px" width="14" height="12" viewBox="0 0 14 12"><path d="M1.8 1 V11 L8.4 6 Z" fill="#8f8f8f"/><rect x="10.2" y="1" width="1.8" height="10" fill="#8f8f8f"/></svg>
<div style="position:absolute;left:0px;top:0px;width:1683px;height:1px;background:#6e6e6e;"></div>
<div style="position:absolute;left:0px;top:0px;width:1px;height:1079px;background:#5a5a5a;"></div>
<div style="position:absolute;left:1682px;top:0px;width:1px;height:1079px;background:#6e6e6e;"></div>
<div style="position:absolute;left:0px;top:1078px;width:1683px;height:1px;background:#5f5f5f;"></div>
<svg style="left:0;top:0" width="1683" height="1079" viewBox="0 0 1683 1079"><g fill="none" stroke="#858585" stroke-width=".62"><path d="M546.5 643.5 L561.4 643.5 A5.0 5.0 0 0 1 566.4 648.5 L566.4 657.9 A5.0 5.0 0 0 0 571.4 662.9 L584.7 662.9"/><path d="M546.5 682.3 L561.4 682.3 A5.0 5.0 0 0 0 566.4 677.3 L566.4 667.9 A5.0 5.0 0 0 1 571.4 662.9 L584.7 662.9"/><path d="M689.5 662.9 L727.7 662.9"/><path d="M546.5 755.3 L584.7 755.3"/><path d="M832.5 662.9 L847.4 662.9 A5.0 5.0 0 0 0 852.4 657.9 L852.4 605.8 A5.0 5.0 0 0 1 857.4 600.8 L870.7 600.8"/><path d="M832.5 662.9 L1061.5 662.9 A5.0 5.0 0 0 0 1066.5 657.9 L1066.5 481.2 A5.0 5.0 0 0 1 1071.5 476.2 L1156.4 476.2"/><path d="M1072.5 476.2 L1069.5 476.2 A3.0 3.0 0 0 0 1066.5 479.2 L1066.5 654.8 A5.0 5.0 0 0 0 1071.5 659.8 L1156.4 659.8"/><path d="M832.5 431.8 L870.7 431.8"/><path d="M832.5 431.8 L847.3 431.8 A5.0 5.0 0 0 0 852.3 426.8 L852.3 312.6 A5.0 5.0 0 0 1 857.3 307.6 L870.7 307.6"/><path d="M832.5 431.8 L847.5 431.8 A5.0 5.0 0 0 1 852.5 436.8 L852.5 595.8 A5.0 5.0 0 0 0 857.5 600.8 L870.7 600.8"/><path d="M975.5 431.8 L990.4 431.8 A5.0 5.0 0 0 0 995.4 426.8 L995.4 366.6 A5.0 5.0 0 0 1 1000.4 361.6 L1156.4 361.6"/><path d="M975.5 431.8 L990.4 431.8 A5.0 5.0 0 0 1 995.4 436.8 L995.4 471.2 A5.0 5.0 0 0 0 1000.4 476.2 L1156.4 476.2"/><path d="M832.5 431.8 L1061.5 431.8 A5.0 5.0 0 0 1 1066.5 436.8 L1066.5 471.2 A5.0 5.0 0 0 0 1071.5 476.2 L1156.4 476.2"/><path d="M1118.6 390.6 L1133.3 390.6 A5.0 5.0 0 0 1 1138.3 395.6 L1138.3 471.2 A5.0 5.0 0 0 0 1143.3 476.2 L1156.4 476.2"/><path d="M1118.6 600.8 L1133.3 600.8 A5.0 5.0 0 0 0 1138.3 595.8 L1138.3 481.2 A5.0 5.0 0 0 1 1143.3 476.2 L1156.4 476.2"/><path d="M1118.6 600.8 L1299.8 600.7"/><path d="M975.5 600.8 L1299.8 600.7"/><path d="M975.5 600.8 L990.4 600.8 A5.0 5.0 0 0 0 995.4 595.8 L995.4 567.3 A5.0 5.0 0 0 1 1000.4 562.3 L1013.8 562.3"/><path d="M975.5 600.8 L1013.8 600.8"/><path d="M975.5 600.8 L990.4 600.8 A5.0 5.0 0 0 1 995.4 605.8 L995.4 634.5 A5.0 5.0 0 0 0 1000.4 639.5 L1013.8 639.5"/><path d="M1118.6 639.5 L1133.2 639.5 A5.0 5.0 0 0 1 1138.2 644.5 L1138.2 654.8 A5.0 5.0 0 0 0 1143.2 659.8 L1156.4 659.8"/><path d="M1261.2 361.6 L1276.5 361.6 A5.0 5.0 0 0 1 1281.5 366.6 L1281.5 407.5 A5.0 5.0 0 0 0 1286.5 412.5 L1299.8 412.5"/><path d="M1261.2 412.5 L1299.8 412.5"/><path d="M1261.2 476.2 L1276.5 476.2 A5.0 5.0 0 0 0 1281.5 471.2 L1281.5 417.5 A5.0 5.0 0 0 1 1286.5 412.5 L1299.8 412.5"/><path d="M1261.2 476.2 L1276.0 476.2 A5.0 5.0 0 0 1 1281.0 481.2 L1281.0 595.7 A5.0 5.0 0 0 0 1286.0 600.7 L1299.8 600.7"/></g><g fill="none" stroke="#000" stroke-opacity=".3" stroke-width="1.3"></g><g fill="#8a8a8a"><path d="M590.4 662.9 L584.8 659.7 V666.1 Z"/><path d="M733.4 662.9 L727.8 659.7 V666.1 Z"/><path d="M590.4 755.3 L584.8 752.1 V758.5 Z"/><path d="M876.4 600.8 L870.8 597.6 V604.0 Z"/><path d="M1162.1 476.2 L1156.5 473.0 V479.4 Z"/><path d="M1162.1 659.8 L1156.5 656.6 V663.0 Z"/><path d="M876.4 431.8 L870.8 428.6 V435.0 Z"/><path d="M876.4 307.6 L870.8 304.4 V310.8 Z"/><path d="M1162.1 361.6 L1156.5 358.4 V364.8 Z"/><path d="M1305.5 600.7 L1299.9 597.5 V603.9 Z"/><path d="M1019.5 562.3 L1013.9 559.1 V565.5 Z"/><path d="M1019.5 600.8 L1013.9 597.6 V604.0 Z"/><path d="M1019.5 639.5 L1013.9 636.3 V642.7 Z"/><path d="M1305.5 412.5 L1299.9 409.3 V415.7 Z"/></g></svg>
<div class="nd" style="left:446.2px;top:633.5px"><i style="background:#0072bd"></i><span>sub1Airframe.m</span></div>
<div class="nd" style="left:446.2px;top:672.3px"><i style="background:#0072bd"></i><span style="top:3.65px">sub2Airframe.m</span></div>
<div class="nd" style="left:589.2px;top:652.9px"><i style="background:#0072bd"></i><span>subAirframe.m</span></div>
<div class="nd" style="left:732.2px;top:652.9px"><i style="background:#0072bd"></i><span>f14_airframe_test.m</span></div>
<div class="nd" style="left:446.2px;top:745.3px"><i style="background:#0072bd"></i><span style="top:3.25px">subAbsAirframe.m</span></div>
<div class="nd" style="left:589.2px;top:745.3px"><i style="background:#0072bd"></i><span style="top:3.25px">absAirframe.m</span></div>
<div class="nd" style="left:446px;top:818px"><i style="background:#0072bd"></i><span>find_top_models.m</span></div>
<div class="nd" style="left:624px;top:818px"><i style="background:#0072bd"></i><span>runUnitTest.m</span></div>
<div class="nd" style="left:802px;top:818px"><i style="background:#0072bd"></i><span>billOfMaterials.m</span></div>
<div class="nd" style="left:980px;top:818px"><i style="background:#0072bd"></i><span>rebuild_s_functions.m</span></div>
<div class="nd" style="left:1158px;top:818px"><i style="background:#0072bd"></i><span>analyzeModelFiles.m</span></div>
<div class="nd" style="left:446px;top:891.4px"><i style="background:#0072bd"></i><span style="top:3.65px">enumAirframe.m</span></div>
<div class="nd" style="left:624px;top:891.4px"><i style="background:#0072bd"></i><span style="top:3.65px">checkCodeProblems.m</span></div>
<div class="nd" style="left:732.2px;top:421.8px"><i style="background:#d95319"></i><span>slproject_f14.slx</span></div>
<div class="nd" style="left:875.2px;top:297.6px"><i style="background:#d95319"></i><span>wind_gust_lib.slx</span></div>
<div class="nd" style="left:875.2px;top:421.8px"><i style="background:#d95319"></i><span>NonLinearActuator.slx</span></div>
<div class="nd" style="left:875.2px;top:590.8px"><i style="background:#d95319"></i><span>f14_airframe.slx</span></div>
<div class="nd" style="left:1018.3px;top:380.6px"><i style="background:#d95319"></i><span>LinearActuator.slx</span></div>
<div class="nd" style="left:1018.3px;top:552.3px"><i style="background:#7e2f8e"></i><span style="top:3.65px">timesthree.tlc</span></div>
<div class="nd" style="left:1018.3px;top:590.8px"><i style="background:#d95319"></i><span>vertical_channel.slx</span></div>
<div class="nd w" style="left:1018.3px;top:629.5px"><i style="background:#666666"></i><svg style="left:2.2px;top:6.3px" width="9" height="8" viewBox="0 0 9 8"><path d="M4.3 0.6 L8.1 7.3 H0.5 Z" fill="#ecd660" stroke="#b89c34" stroke-width=".8" stroke-linejoin="round"/><path d="M4.3 2.8 V5 M4.3 5.8 V6.5" stroke="#6a5614" stroke-width=".9" fill="none"/></svg><span>timesthree.mexw64</span></div>
<div class="nd" style="left:1160.9px;top:351.6px"><i style="background:#d95319"></i><span>AnalogControl.slx</span></div>
<div class="nd" style="left:1160.9px;top:402.5px"><i style="background:#d95319"></i><span>DigitalControl.slx</span></div>
<div class="nd" style="left:1160.9px;top:466.2px"><i style="background:#edb120"></i><span style="top:5.25px">system_model.sldd</span></div>
<div class="nd" style="left:1160.9px;top:649.8px"><i style="background:#7e2f8e"></i><span>timesthree.c</span></div>
<div class="nd w" style="left:1304.3px;top:402.5px"><i style="background:#edb120"></i><svg style="left:2.2px;top:6.3px" width="9" height="8" viewBox="0 0 9 8"><path d="M4.3 0.6 L8.1 7.3 H0.5 Z" fill="#ecd660" stroke="#b89c34" stroke-width=".8" stroke-linejoin="round"/><path d="M4.3 2.8 V5 M4.3 5.8 V6.5" stroke="#6a5614" stroke-width=".9" fill="none"/></svg><span>controller.sldd</span></div>
<div class="nd" style="left:1304.3px;top:590.7px"><i style="background:#edb120"></i><span>buses.sldd</span></div>
<svg style="left:0;top:0" width="1683" height="1079" viewBox="0 0 1683 1079"><g fill="#fff" stroke="#a6a6a6" stroke-width=".95"><circle cx="546.8" cy="643.6" r="2.45"/><circle cx="546.8" cy="682.4" r="2.45"/><circle cx="689.8" cy="663.0" r="2.45"/><circle cx="546.8" cy="755.4" r="2.45"/><circle cx="832.8" cy="663.0" r="2.45"/><circle cx="832.8" cy="431.9" r="2.45"/><circle cx="975.8" cy="431.9" r="2.45"/><circle cx="1118.9" cy="390.7" r="2.45"/><circle cx="1118.9" cy="600.9" r="2.45"/><circle cx="975.8" cy="600.9" r="2.45"/><circle cx="1118.9" cy="639.6" r="2.45"/><circle cx="1261.5" cy="361.7" r="2.45"/><circle cx="1261.5" cy="412.6" r="2.45"/><circle cx="1261.5" cy="476.3" r="2.45"/></g></svg>
<svg style="left:0;top:0" width="1683" height="1079" viewBox="0 0 1683 1079"><g transform="translate(-143.87 699.83) scale(0.3838 0.384)"><g fill="#7d8b98" fill-opacity=".58" stroke="#6f7e8c" stroke-opacity=".45" stroke-width="2"><rect x="446.2" y="633.5" width="100" height="18"/><rect x="446.2" y="672.3" width="100" height="18"/><rect x="589.2" y="652.9" width="100" height="18"/><rect x="732.2" y="652.9" width="100" height="18"/><rect x="446.2" y="745.3" width="100" height="18"/><rect x="589.2" y="745.3" width="100" height="18"/><rect x="446" y="818" width="100" height="18"/><rect x="624" y="818" width="100" height="18"/><rect x="802" y="818" width="100" height="18"/><rect x="980" y="818" width="100" height="18"/><rect x="1158" y="818" width="100" height="18"/><rect x="446" y="891.4" width="100" height="18"/><rect x="624" y="891.4" width="100" height="18"/><rect x="732.2" y="421.8" width="100" height="18"/><rect x="875.2" y="297.6" width="100" height="18"/><rect x="875.2" y="421.8" width="100" height="18"/><rect x="875.2" y="590.8" width="100" height="18"/><rect x="1018.3" y="380.6" width="100" height="18"/><rect x="1018.3" y="552.3" width="100" height="18"/><rect x="1018.3" y="590.8" width="100" height="18"/><rect x="1018.3" y="629.5" width="100" height="18"/><rect x="1160.9" y="351.6" width="100" height="18"/><rect x="1160.9" y="402.5" width="100" height="18"/><rect x="1160.9" y="466.2" width="100" height="18"/><rect x="1160.9" y="649.8" width="100" height="18"/><rect x="1304.3" y="402.5" width="100" height="18"/><rect x="1304.3" y="590.7" width="100" height="18"/></g><g fill="none" stroke="#909dab" stroke-width="1.65"><path d="M546.5 643.5 L566.4 643.5 L566.4 662.9 L589.2 662.9"/><path d="M546.5 682.3 L566.4 682.3 L566.4 662.9 L589.2 662.9"/><path d="M689.5 662.9 L732.2 662.9"/><path d="M546.5 755.3 L589.2 755.3"/><path d="M832.5 662.9 L852.4 662.9 L852.4 600.8 L875.2 600.8"/><path d="M832.5 662.9 L1066.5 662.9 L1066.5 476.2 L1160.9 476.2"/><path d="M1072.5 476.2 L1066.5 476.2 L1066.5 659.8 L1160.9 659.8"/><path d="M832.5 431.8 L875.2 431.8"/><path d="M832.5 431.8 L852.3 431.8 L852.3 307.6 L875.2 307.6"/><path d="M832.5 431.8 L852.5 431.8 L852.5 600.8 L875.2 600.8"/><path d="M975.5 431.8 L995.4 431.8 L995.4 361.6 L1160.9 361.6"/><path d="M975.5 431.8 L995.4 431.8 L995.4 476.2 L1160.9 476.2"/><path d="M832.5 431.8 L1066.5 431.8 L1066.5 476.2 L1160.9 476.2"/><path d="M1118.6 390.6 L1138.3 390.6 L1138.3 476.2 L1160.9 476.2"/><path d="M1118.6 600.8 L1138.3 600.8 L1138.3 476.2 L1160.9 476.2"/><path d="M1118.6 600.8 L1304.3 600.7"/><path d="M975.5 600.8 L1304.3 600.7"/><path d="M975.5 600.8 L995.4 600.8 L995.4 562.3 L1018.3 562.3"/><path d="M975.5 600.8 L1018.3 600.8"/><path d="M975.5 600.8 L995.4 600.8 L995.4 639.5 L1018.3 639.5"/><path d="M1118.6 639.5 L1138.2 639.5 L1138.2 659.8 L1160.9 659.8"/><path d="M1261.2 361.6 L1281.5 361.6 L1281.5 412.5 L1304.3 412.5"/><path d="M1261.2 412.5 L1304.3 412.5"/><path d="M1261.2 476.2 L1281.5 476.2 L1281.5 412.5 L1304.3 412.5"/><path d="M1261.2 476.2 L1281.0 476.2 L1281.0 600.7 L1304.3 600.7"/></g></g></svg>
</body></html>
